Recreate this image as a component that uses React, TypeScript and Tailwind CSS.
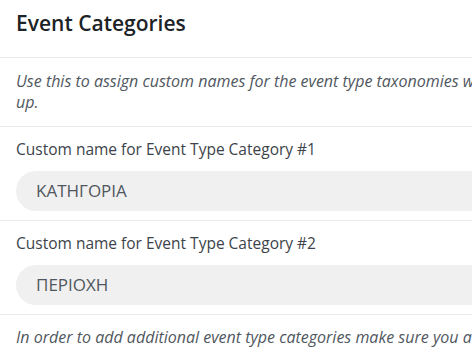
export default function App() {
  const font = { fontFamily: '"Open Sans", "Noto Sans", sans-serif' };
  return (
    <div className="w-[472px] h-[361px] overflow-hidden bg-white" style={font}>
      <div className="w-[604px]">
        <div className="px-4 pt-[9px] h-[58px] border-b border-[#ebebeb]">
          <h2 className="text-[21px] font-semibold text-[#1d2327] leading-[28px]">Event Categories</h2>
        </div>
        <div className="px-4 pt-[13px] pb-[13px] border-b border-[#ebebeb]">
          <p className="italic text-[16px] leading-[21px] text-[#50575e] whitespace-nowrap">
            Use this to assign custom names for the event type taxonomies which you set
            <br />
            up.
          </p>
        </div>
        {["ΚΑΤΗΓΟΡΙΑ", "ΠΕΡΙΟΧΗ"].map((v, i) => (
          <div key={i} className="px-4 pt-[11px] pb-[9px] border-b border-[#ebebeb]">
            <label className="block text-[15.5px] leading-[22px] text-[#3c434a]">
              Custom name for Event Type Category #{i + 1}
            </label>
            <div className="mt-[11px] h-10 rounded-full bg-[#f0f0f0] flex items-center pl-5">
              <span className="text-[17px] text-[#50575e]">{v}</span>
            </div>
          </div>
        ))}
        <div className="px-4 pt-[12px]">
          <p className="italic text-[16px] leading-[21px] text-[#50575e] whitespace-nowrap">
            In order to add additional event type categories make sure you add them in the settings.
          </p>
        </div>
      </div>
    </div>
  );
}
